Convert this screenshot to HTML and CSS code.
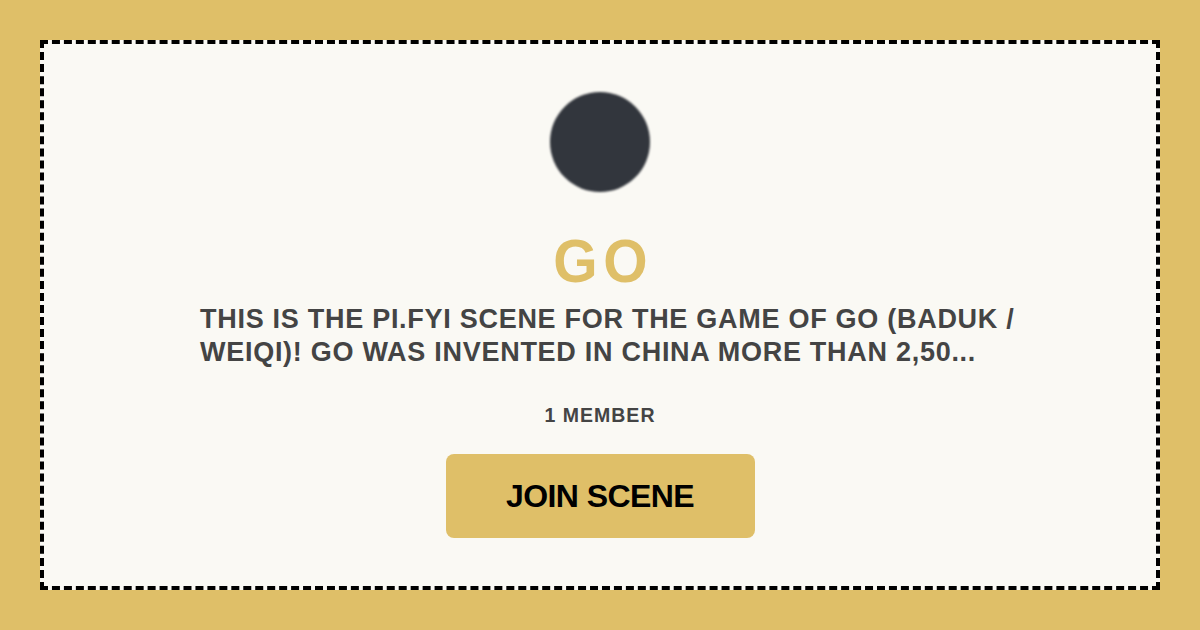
FILE: index.html
```html
<!DOCTYPE html>
<html lang="en">
<head>
<meta charset="utf-8">
<title>Go — pi.fyi scene</title>
<link rel="stylesheet" href="styles.css">
</head>
<body>
  <main class="card">
    <div class="avatar"></div>
    <h1 class="title"><span class="title-text">GO</span></h1>
    <p class="desc">THIS IS THE PI.FYI SCENE FOR THE GAME OF GO (BADUK / WEIQI)! GO WAS INVENTED IN CHINA MORE THAN 2,50...</p>
    <div class="members">1 MEMBER</div>
    <div class="button">JOIN SCENE</div>
  </main>
</body>
</html>
```

FILE: styles.css
```css
html, body {
  margin: 0;
  padding: 0;
}

body {
  width: 1200px;
  height: 630px;
  background: #dfbf68;
  padding: 40px;
  box-sizing: border-box;
  font-family: "Liberation Sans", Arial, sans-serif;
}

.card {
  box-sizing: border-box;
  height: 550px;
  border: 4px dashed #000;
  background: #faf9f4;
  display: flex;
  flex-direction: column;
  align-items: center;
  padding-top: 48px;
}

.avatar {
  width: 100px;
  height: 100px;
  border-radius: 50%;
  background: #32363d;
  filter: blur(0.8px);
}

.title {
  margin: 37px 0 0;
  font-size: 62px;
  line-height: 64px;
  font-weight: 700;
  color: #dfbf68;
}

.title-text {
  display: inline-block;
  letter-spacing: 6px;
  margin-right: -6px;
  transform: scaleX(0.92);
}

.desc {
  align-self: flex-start;
  margin: 10px 0 0 156px;
  width: 840px;
  font-size: 27px;
  line-height: 33px;
  letter-spacing: 0.72px;
  font-weight: 700;
  color: #444444;
}

.members {
  margin-top: 34px;
  font-size: 19.5px;
  line-height: 24px;
  letter-spacing: 1px;
  font-weight: 700;
  color: #444444;
}

.button {
  margin-top: 27px;
  width: 309px;
  height: 84px;
  border-radius: 8px;
  background: #dfbf68;
  color: #000;
  font-size: 32px;
  letter-spacing: -0.6px;
  font-weight: 700;
  display: flex;
  align-items: center;
  justify-content: center;
}
```
